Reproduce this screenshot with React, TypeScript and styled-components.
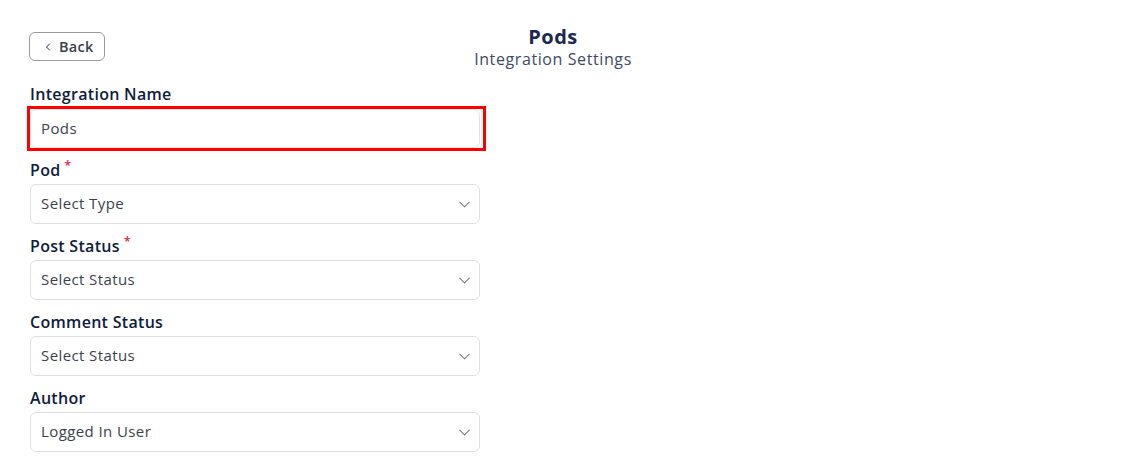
import React from "react";
import styled, { createGlobalStyle } from "styled-components";
import { ChevronDown, ChevronLeft } from "lucide-react";

const GlobalStyle = createGlobalStyle`
  html, body {
    margin: 0;
    padding: 0;
    background: #fff;
  }
  body {
    font-family: "Open Sans", "Noto Sans", Arial, sans-serif;
    color: #0f1d3d;
  }
  * {
    box-sizing: border-box;
  }
`;

const Page = styled.div`
  padding: 26px 59px 0 29px;
`;

const Header = styled.header`
  display: grid;
  grid-template-columns: 1fr auto 1fr;
  align-items: start;
`;

const BackButton = styled.button`
  justify-self: start;
  margin-top: 6px;
  display: flex;
  align-items: center;
  gap: 5px;
  height: 29px;
  width: 76px;
  padding: 0 0 0 12px;
  background: #fff;
  border: 1px solid #9a9a9a;
  border-radius: 6px;
  font-family: inherit;
  font-size: 14.5px;
  font-weight: 600;
  color: #3a3f4d;
  letter-spacing: 0.3px;
  cursor: pointer;

  svg {
    color: #1c2a5a;
  }
`;

const TitleBlock = styled.div`
  text-align: center;
`;

const Title = styled.h1`
  margin: 0;
  font-size: 20px;
  line-height: 22px;
  font-weight: 700;
  color: #1b2851;
  letter-spacing: 0.5px;
`;

const Subtitle = styled.div`
  font-size: 16px;
  line-height: 22px;
  color: #3e4a66;
  letter-spacing: 0.6px;
`;

const Form = styled.form`
  margin-top: 14px;
  padding-left: 1px;
  display: flex;
  flex-direction: column;
  gap: 12px;
  width: 456px;
`;

const Field = styled.div<{ $gap?: number }>`
  display: flex;
  flex-direction: column;
  gap: ${(p) => p.$gap ?? 4}px;
`;

const Label = styled.label`
  font-size: 16px;
  line-height: 20px;
  font-weight: 600;
  color: #0e1c3d;
  letter-spacing: 0.3px;

  sup {
    color: #e0203a;
    font-size: 12px;
    margin-left: 4px;
    vertical-align: top;
    line-height: 12px;
  }
`;

const Highlight = styled.div`
  width: 453px;
  outline: 3px solid #ff0000;
`;

const TextInput = styled.input`
  display: block;
  width: 450px;
  height: 39px;
  padding: 0 10px 2px;
  border: 1px solid #e3e3e3;
  border-radius: 6px;
  font-family: inherit;
  font-size: 15px;
  color: #3b3f4c;
  letter-spacing: 0.4px;
  outline: none;
`;

const SelectBox = styled.div`
  width: 450px;
  height: 40px;
  padding: 0 5px 3px 10px;
  display: flex;
  align-items: center;
  justify-content: space-between;
  border: 1px solid #e0e0e0;
  border-radius: 6px;
  font-size: 15px;
  color: #3b3f4c;
  letter-spacing: 0.4px;

  svg {
    color: #7c7c7c;
    margin-top: 3px;
  }
`;

const fields = [
  { label: "Pod", value: "Select Type", required: true },
  { label: "Post Status", value: "Select Status", required: true },
  { label: "Comment Status", value: "Select Status", required: false },
  { label: "Author", value: "Logged In User", required: false },
];

const App = () => (
  <Page>
    <GlobalStyle />
    <Header>
      <BackButton type="button">
        <ChevronLeft size={12} strokeWidth={2} />
        Back
      </BackButton>
      <TitleBlock>
        <Title>Pods</Title>
        <Subtitle>Integration Settings</Subtitle>
      </TitleBlock>
      <div />
    </Header>
    <Form onSubmit={(e) => e.preventDefault()}>
      <Field $gap={5}>
        <Label>Integration Name</Label>
        <Highlight>
          <TextInput defaultValue="Pods" />
        </Highlight>
      </Field>
      {fields.map((f) => (
        <Field key={f.label}>
          <Label>
            {f.label}
            {f.required && <sup>*</sup>}
          </Label>
          <SelectBox>
            <span>{f.value}</span>
            <ChevronDown size={19} strokeWidth={1.3} />
          </SelectBox>
        </Field>
      ))}
    </Form>
  </Page>
);

export default App;
